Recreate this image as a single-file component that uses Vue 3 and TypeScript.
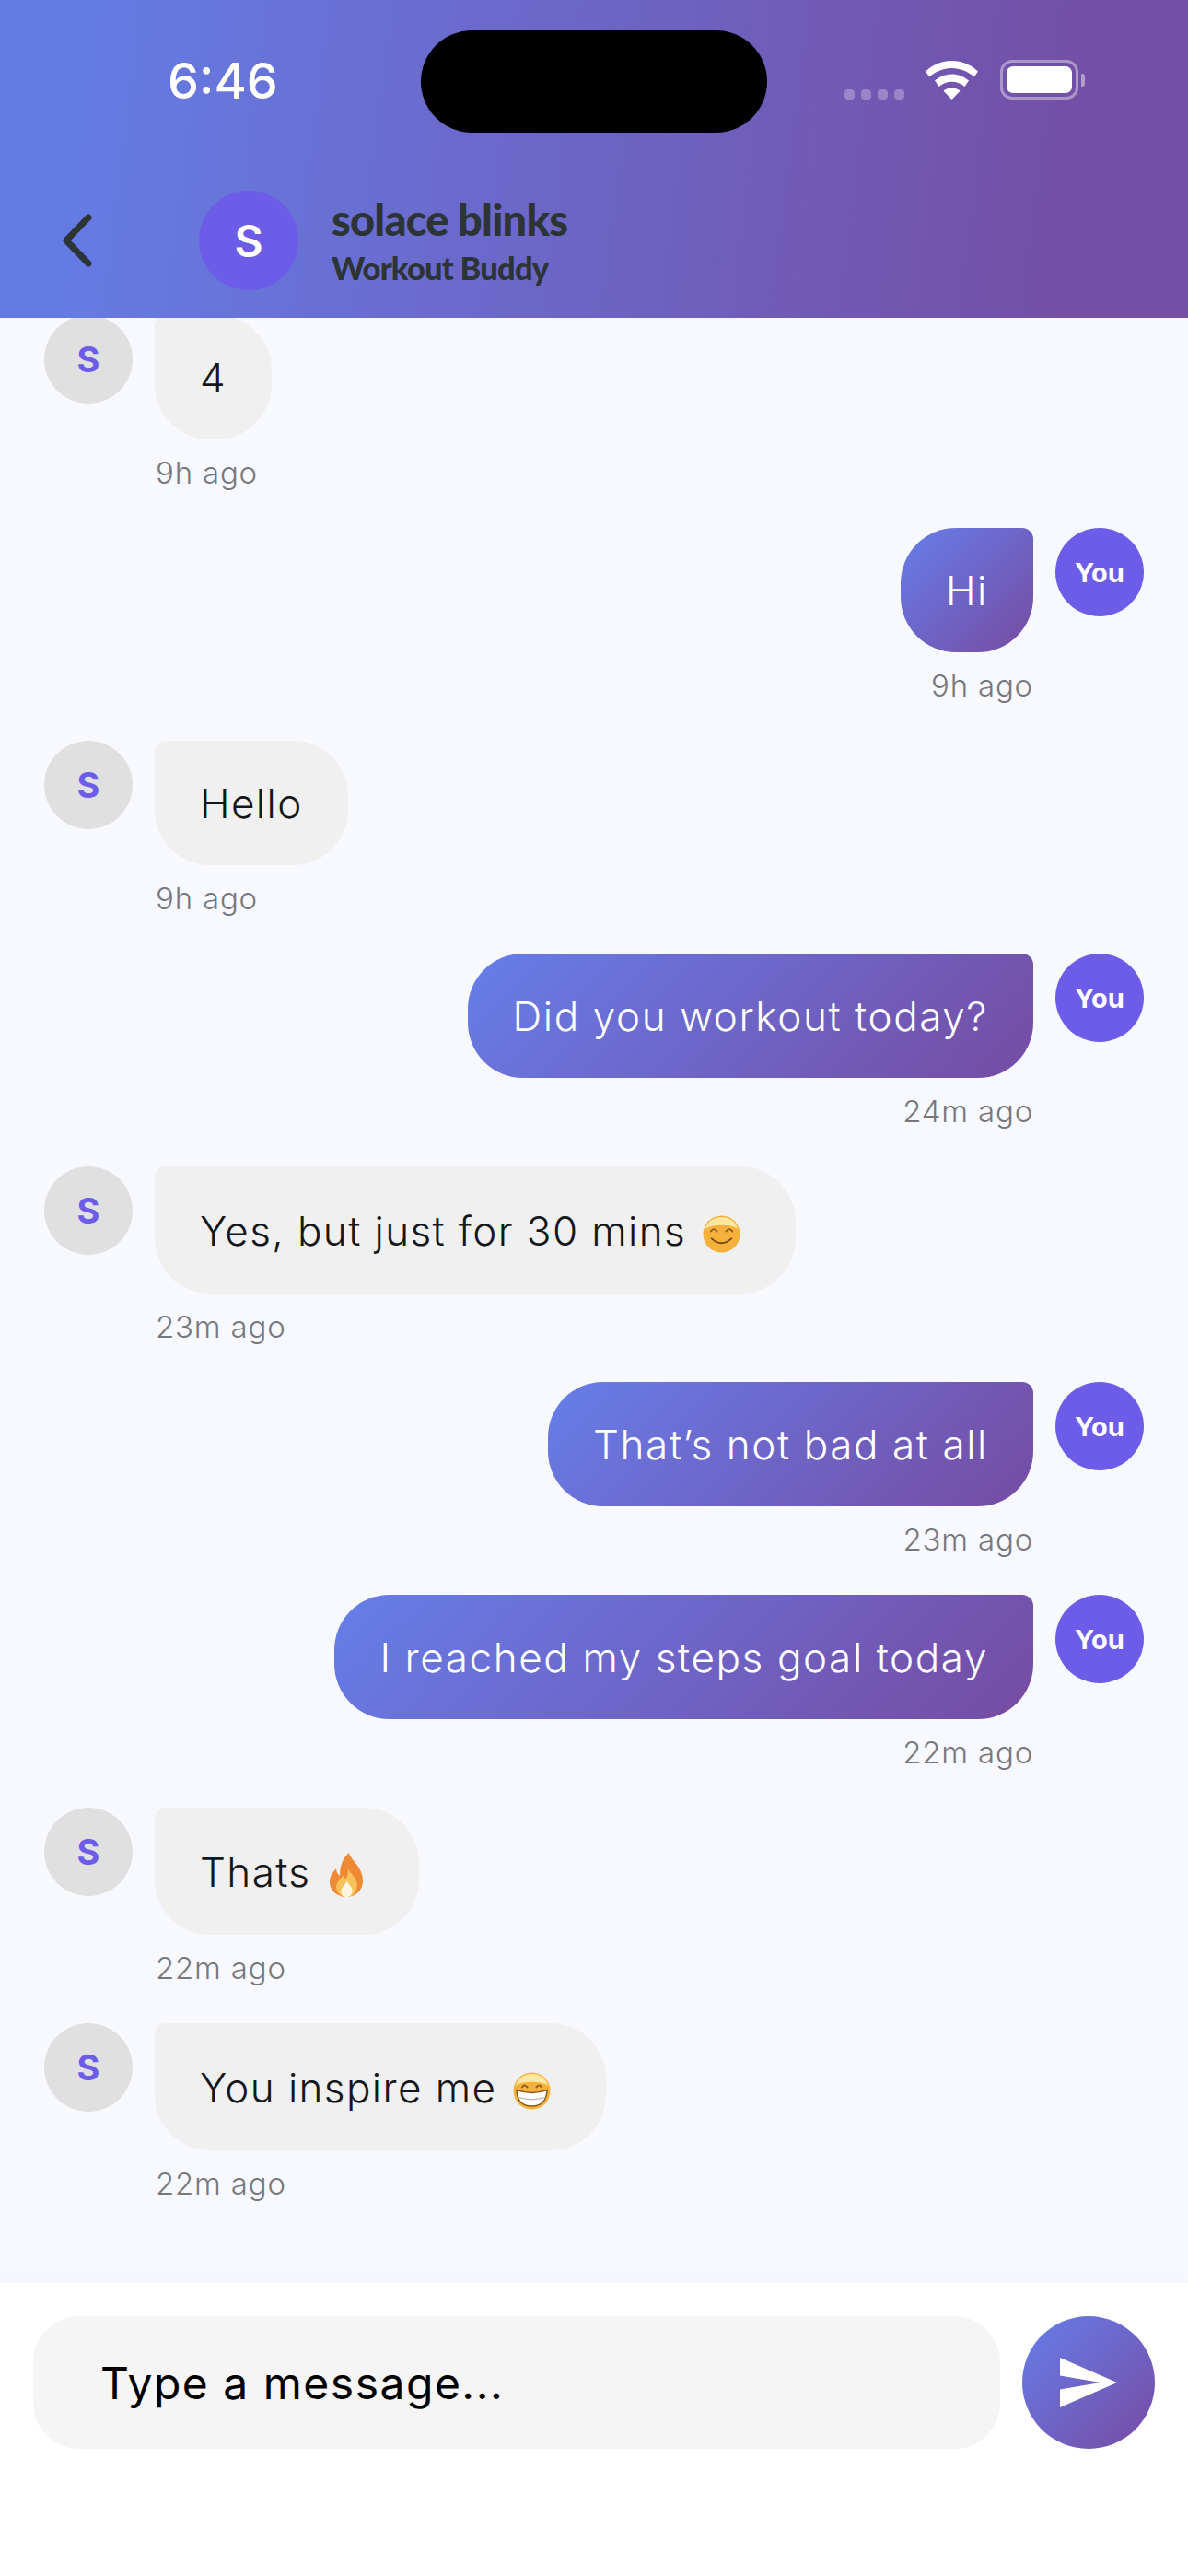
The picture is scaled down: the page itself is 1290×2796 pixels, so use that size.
<script setup lang="ts">
interface Message {
  id: number
  mine: boolean
  text: string
  time: string
  emoji?: 'smile' | 'fire' | 'grin'
}

const messages: Message[] = [
  { id: 1, mine: false, text: '4', time: '9h ago' },
  { id: 2, mine: true, text: 'Hi', time: '9h ago' },
  { id: 3, mine: false, text: 'Hello', time: '9h ago' },
  { id: 4, mine: true, text: 'Did you workout today?', time: '24m ago' },
  { id: 5, mine: false, text: 'Yes, but just for 30 mins', time: '23m ago', emoji: 'smile' },
  { id: 6, mine: true, text: 'That’s not bad at all', time: '23m ago' },
  { id: 7, mine: true, text: 'I reached my steps goal today', time: '22m ago' },
  { id: 8, mine: false, text: 'Thats', time: '22m ago', emoji: 'fire' },
  { id: 9, mine: false, text: 'You inspire me', time: '22m ago', emoji: 'grin' }
]
</script>

<template>
  <div class="screen">
    <header class="header">
      <div class="status">
        <span class="clock">6:46</span>
        <div class="island"></div>
        <div class="status-icons">
          <div class="signal"><i></i><i></i><i></i><i></i></div>
          <svg class="wifi" width="57" height="42" viewBox="0 0 57 42">
            <path d="M28.500 0C17.500 0 7.800 4.200 0 11.500L4.200 17.500C11 11.500 19.300 8 28.500 8S46 11.500 52.800 17.500L57 11.500C49.200 4.200 39.500 0 28.500 0Z" fill="#fff" />
            <path d="M28.500 14.500C21.800 14.500 15.500 17 10 21.500L14.500 28C18.500 24.800 23.300 22.800 28.500 22.800S38.500 24.800 42.500 28L47 21.500C41.500 17 35.200 14.500 28.500 14.500Z" fill="#fff" />
            <path d="M28.500 29.500C25 29.500 22 30.600 19.500 32.800L28.500 42L37.500 32.800C35 30.600 32 29.500 28.500 29.500Z" fill="#fff" />
          </svg>
          <div class="battery"><div class="battery-fill"></div></div>
          <div class="battery-nub"></div>
        </div>
      </div>
      <div class="nav">
        <svg class="back" width="32" height="58" viewBox="0 0 32 58">
          <path d="M28 4L4 29L28 54" fill="none" stroke="#2d3436" stroke-width="7" stroke-linecap="round" stroke-linejoin="round" />
        </svg>
        <div class="nav-avatar">S</div>
        <div class="nav-text">
          <div class="nav-name">solace blinks</div>
          <div class="nav-role">Workout Buddy</div>
        </div>
      </div>
    </header>

    <main class="chat">
      <div v-for="m in messages" :key="m.id" class="row" :class="{ mine: m.mine }">
        <div class="avatar">{{ m.mine ? 'You' : 'S' }}</div>
        <div class="body">
          <div class="bubble" :class="{ 'with-emoji': m.emoji }">
            <span>{{ m.text }}</span>
            <svg v-if="m.emoji === 'smile'" class="emoji" viewBox="0 0 42 42">
              <circle cx="21" cy="21" r="20.500" fill="#f6b13d" />
              <path d="M3 15C6 6 13 2 21 2s15 4 18 13c-5-3-11-4-18-4S8 12 3 15Z" fill="#fde8a0" />
              <path d="M9 18q3.500-5 7 0M26 18q3.500-5 7 0" fill="none" stroke="#8a5a1c" stroke-width="1.800" stroke-linecap="round" />
              <path d="M10 26q11 10 22 0" fill="none" stroke="#7a4a18" stroke-width="2" stroke-linecap="round" />
            </svg>
            <svg v-else-if="m.emoji === 'fire'" class="emoji fire" viewBox="0 0 36 56" preserveAspectRatio="none">
              <path d="M20 0C23 10 35 18 35 36C35 48 27 56 18 56C8 56 0 48 0 37C0 30 3 24 7 20C7 25 9 28 11 29C10 18 14 7 20 0Z" fill="#ee8a35" />
              <path d="M19 18C20 26 29 31 29 41C29 50 24 56 18 56C11 56 7 50 7 43C7 36 12 34 14 29C16 31 17 33 17 34C19 29 20 24 19 18Z" fill="#f9c25a" />
              <path d="M18 36C20 41 24 43 24 48C24 53 21 56 18 56C14 56 12 53 12 49C12 44 16 42 18 36Z" fill="#fff6e0" />
            </svg>
            <svg v-else-if="m.emoji === 'grin'" class="emoji" viewBox="0 0 42 42">
              <circle cx="21" cy="21" r="20.500" fill="#f6b13d" />
              <path d="M3 15C6 6 13 2 21 2s15 4 18 13c-5-3-11-4-18-4S8 12 3 15Z" fill="#fde8a0" />
              <path d="M10 17q3-4.500 6 0M26 17q3-4.500 6 0" fill="none" stroke="#8a5a1c" stroke-width="1.800" stroke-linecap="round" />
              <path d="M4 20q17 6 34 0q-1 18-17 18T4 20Z" fill="#fff" stroke="#8a5a1c" stroke-width="1.500" />
              <path d="M6 28q15 5 30 0" fill="none" stroke="#b9b9b9" stroke-width="1.500" />
            </svg>
          </div>
          <div class="time">{{ m.time }}</div>
        </div>
      </div>
    </main>

    <footer class="composer">
      <input class="input" type="text" placeholder="Type a message..." />
      <button class="send" type="button" aria-label="Send">
        <svg width="62" height="54" viewBox="0 0 62 54">
          <path d="M0 0L62 27L0 54V34.500L44 27L0 19.500Z" fill="#fff" />
        </svg>
      </button>
    </footer>
  </div>
</template>

<style>
html,
body {
  margin: 0;
  background: #fff;
}
</style>

<style scoped>
.screen {
  width: 1290px;
  height: 2796px;
  display: flex;
  flex-direction: column;
  overflow: hidden;
  background: #f8f9ff;
  font-family: Inter, "Liberation Sans", sans-serif;
}
.header {
  position: relative;
  z-index: 1;
  height: 345px;
  box-sizing: border-box;
  padding-top: 33px;
  flex-shrink: 0;
  background: linear-gradient(97deg, #657be4 8%, #744fa5 90%);
}
.status {
  display: flex;
  align-items: center;
  height: 111px;
}
.clock {
  width: 275px;
  margin-left: 182px;
  font-size: 54px;
  font-weight: 500;
  color: #fff;
  margin-top: -2px;
}
.island {
  width: 376px;
  height: 111px;
  border-radius: 56px;
  background: #000;
}
.status-icons {
  display: flex;
  align-items: flex-end;
  margin-left: 84px;
  margin-top: -4px;
  height: 42px;
}
.signal {
  display: flex;
  gap: 7px;
  margin-right: 23px;
}
.signal i {
  width: 11px;
  height: 11px;
  border-radius: 4px;
  background: rgba(255, 255, 255, 0.28);
}
.battery {
  width: 85px;
  height: 43px;
  box-sizing: border-box;
  margin-left: 24px;
  padding: 4px;
  border: 3px solid rgba(255, 255, 255, 0.4);
  border-radius: 13px;
}
.battery-fill {
  height: 100%;
  border-radius: 7px;
  background: #fff;
}
.battery-nub {
  width: 4px;
  height: 14px;
  margin: 0 0 14px 3px;
  border-radius: 0 3px 3px 0;
  background: rgba(255, 255, 255, 0.45);
}
.nav {
  display: flex;
  align-items: center;
  margin-top: 63px;
  padding-left: 68px;
}
.back {
  margin-right: 116px;
}
.nav-avatar {
  width: 108px;
  height: 108px;
  border-radius: 50%;
  display: flex;
  align-items: center;
  justify-content: center;
  margin-right: 36px;
  background: #6c5ce7;
  color: #fff;
  font-size: 48px;
  font-weight: 600;
}
.nav-text {
  font-family: Lato, "Open Sans", sans-serif;
  font-weight: 900;
  color: #2d3436;
  padding-top: 3px;
}
.nav-name {
  font-size: 47px;
  line-height: 50px;
  letter-spacing: -0.800px;
}
.nav-role {
  margin-top: 6px;
  font-size: 34.500px;
  line-height: 44px;
  letter-spacing: -0.800px;
}
.chat {
  flex: 1;
  min-height: 0;
  display: flex;
  flex-direction: column;
  justify-content: flex-end;
  gap: 40px;
  overflow: hidden;
  padding: 0 48px 88px;
}
.row {
  display: flex;
  flex-shrink: 0;
  align-items: flex-start;
  gap: 24px;
}
.row.mine {
  flex-direction: row-reverse;
}
.avatar {
  width: 96px;
  height: 96px;
  flex-shrink: 0;
  border-radius: 50%;
  display: flex;
  align-items: center;
  justify-content: center;
  background: #e0e0e0;
  color: #6c5ce7;
  font-size: 38px;
  font-weight: 700;
}
.mine .avatar {
  background: #6c5ce7;
  color: #fff;
  font-size: 29px;
}
.body {
  display: flex;
  flex-direction: column;
  align-items: flex-start;
}
.mine .body {
  align-items: flex-end;
}
.bubble {
  display: flex;
  align-items: center;
  padding: 37px 49px 35px;
  font-size: 44px;
  font-weight: 350;
  letter-spacing: 1.400px;
  line-height: 63px;
  color: #15161a;
  background: #f0f0f0;
  border-radius: 12px 60px 60px 60px;
}
.with-emoji {
  line-height: 66px;
  padding-right: 60px;
}
.mine .bubble {
  color: #fff;
  font-weight: 300;
  letter-spacing: 1.600px;
  background: linear-gradient(135deg, #667eea 0%, #764ba2 100%);
  border-radius: 60px 12px 60px 60px;
}
.emoji {
  width: 41px;
  height: 41px;
  margin-left: 18px;
  margin-top: 6px;
}
.fire {
  width: 37px;
  height: 48px;
  margin-left: 21px;
}
.time {
  margin: 16px 0 0 1px;
  font-size: 33px;
  line-height: 40px;
  font-weight: 300;
  letter-spacing: 0.800px;
  color: #77787e;
}
.composer {
  flex-shrink: 0;
  height: 318px;
  box-sizing: border-box;
  display: flex;
  align-items: flex-start;
  gap: 24px;
  padding: 36px 36px 0;
  background: #fff;
  box-shadow: 0 -4px 24px rgba(0, 0, 0, 0.03);
}
.input {
  flex: 1;
  height: 144px;
  box-sizing: border-box;
  padding: 0 73px;
  border: 0;
  outline: 0;
  border-radius: 50px;
  background: #f5f5f5;
  font-family: Inter, sans-serif;
  font-size: 48px;
  letter-spacing: 1.500px;
  color: #000;
}
.input::placeholder {
  color: #000;
  opacity: 1;
}
.send {
  width: 144px;
  height: 144px;
  flex-shrink: 0;
  padding: 0;
  border: 0;
  border-radius: 50%;
  display: flex;
  align-items: center;
  justify-content: center;
  background: linear-gradient(135deg, #667eea 0%, #764ba2 100%);
}
</style>
